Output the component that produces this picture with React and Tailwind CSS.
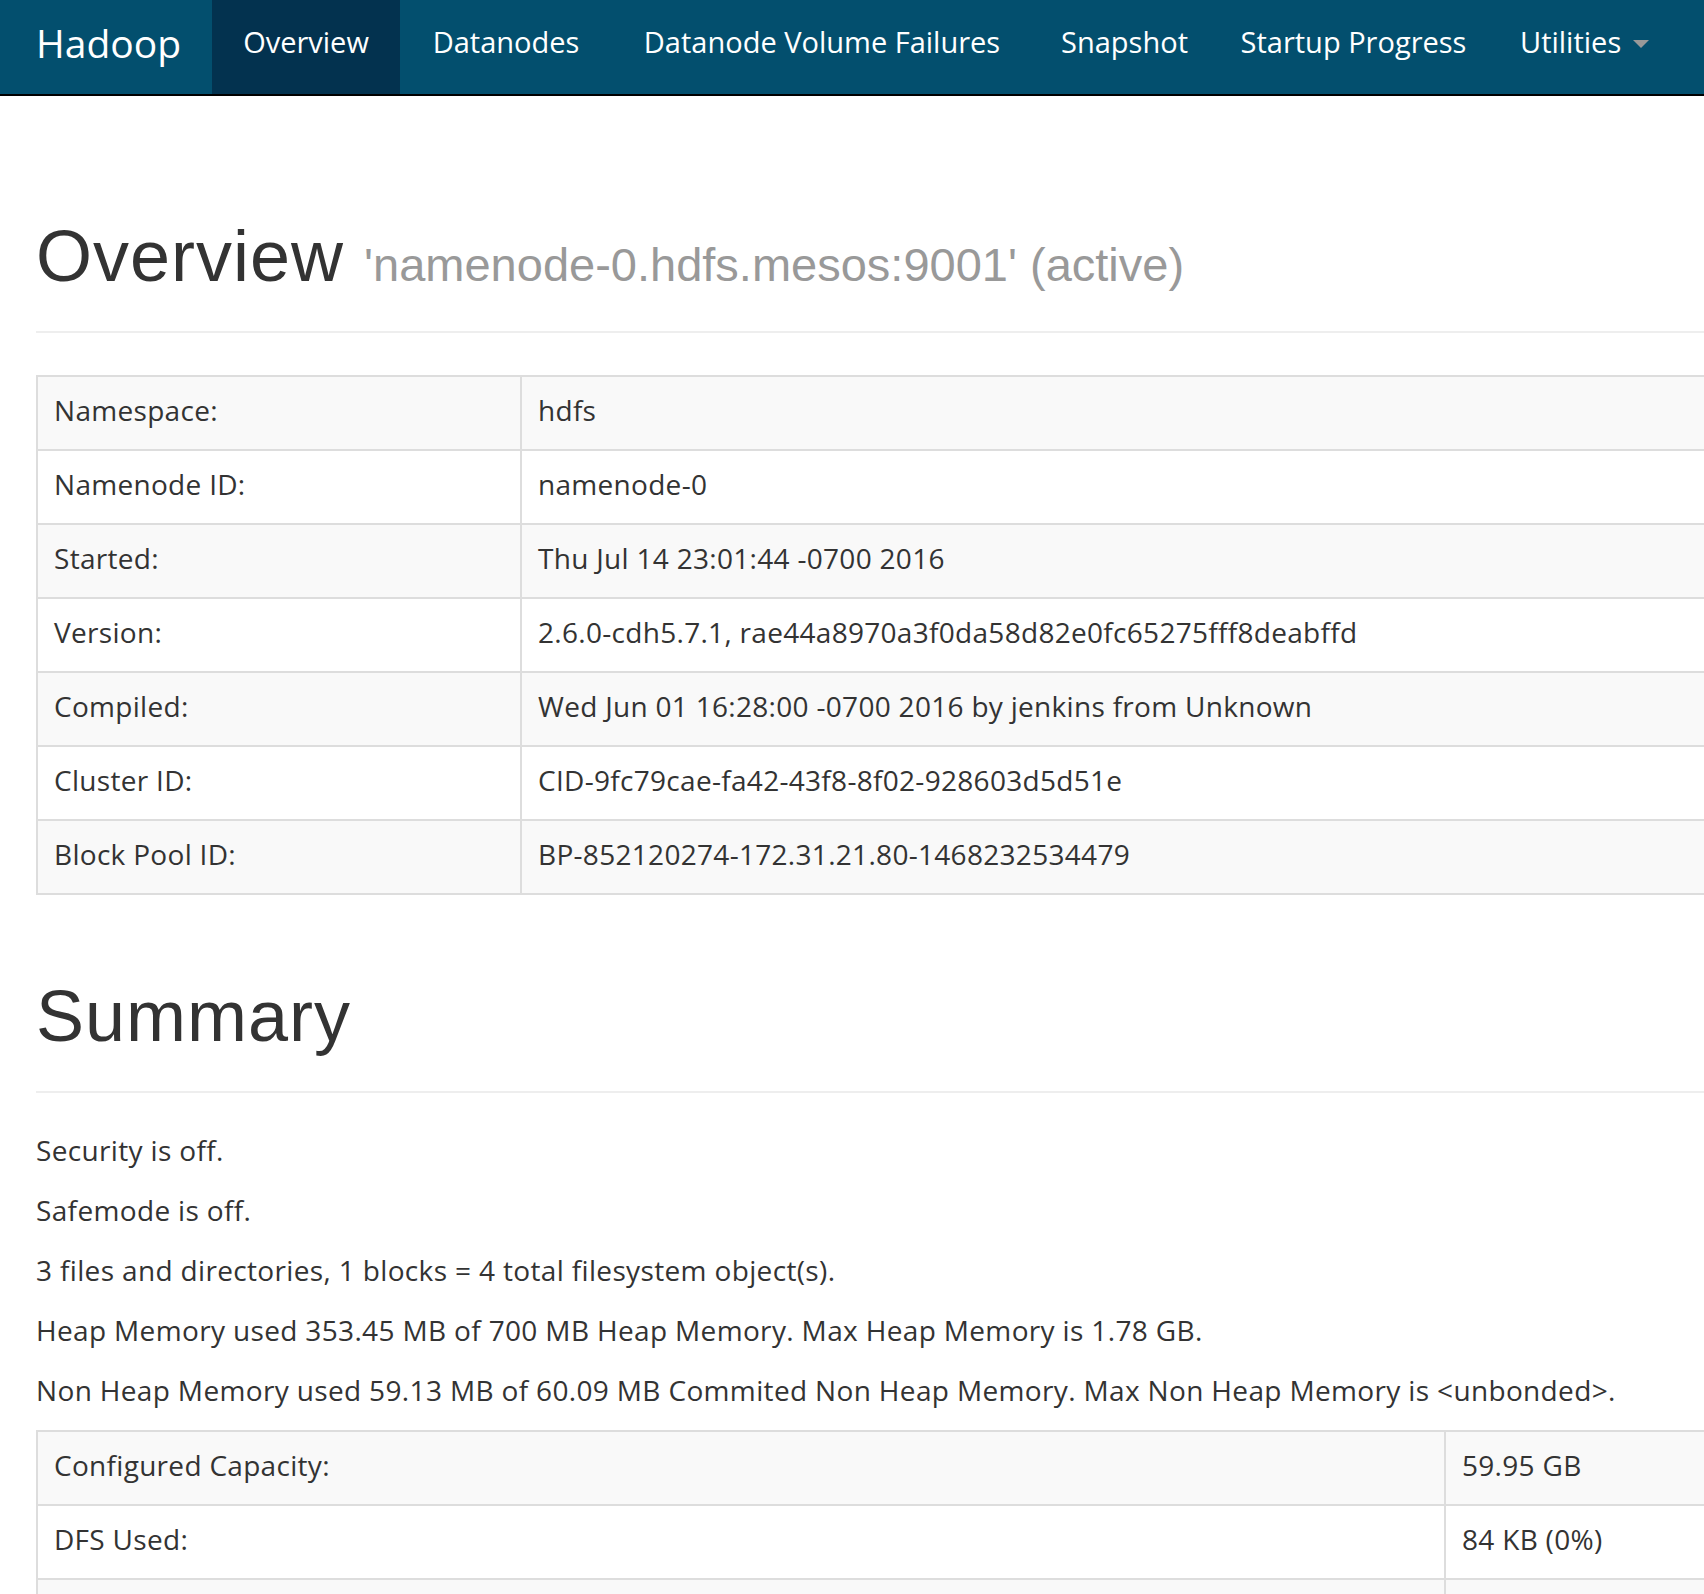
import React from 'react';

// nav boxes are sized to match the original page's spacing
const navLinks = [
  ['Datanodes', 'w-[212px]'],
  ['Datanode Volume Failures', 'w-[420px]'],
  ['Snapshot', 'w-[185px]'],
  ['Startup Progress', 'w-[273px]'],
];

const overviewRows = [
  ['Namespace:', 'hdfs'],
  ['Namenode ID:', 'namenode-0'],
  ['Started:', 'Thu Jul 14 23:01:44 -0700 2016'],
  ['Version:', '2.6.0-cdh5.7.1, rae44a8970a3f0da58d82e0fc65275fff8deabffd'],
  ['Compiled:', 'Wed Jun 01 16:28:00 -0700 2016 by jenkins from Unknown'],
  ['Cluster ID:', 'CID-9fc79cae-fa42-43f8-8f02-928603d5d51e'],
  ['Block Pool ID:', 'BP-852120274-172.31.21.80-1468232534479'],
];

const summaryLines = [
  'Security is off.',
  'Safemode is off.',
  '3 files and directories, 1 blocks = 4 total filesystem object(s).',
  'Heap Memory used 353.45 MB of 700 MB Heap Memory. Max Heap Memory is 1.78 GB.',
  'Non Heap Memory used 59.13 MB of 60.09 MB Commited Non Heap Memory. Max Non Heap Memory is <unbonded>.',
];

const capacityRows = [
  ['Configured Capacity:', '59.95 GB'],
  ['DFS Used:', '84 KB (0%)'],
  ['Non DFS Used:', '4.21 GB'],
];

function Navbar() {
  return (
    <div className="h-[96px] bg-[#034f6e] border-b-2 border-black flex items-stretch pl-[6px] text-white">
      <a className="w-[206px] pl-[30px] pb-[10px] flex items-center text-[39px] leading-none">Hadoop</a>
      <a className="w-[188px] pb-[10px] flex items-center justify-center bg-[#03324f] text-[29px]">Overview</a>
      {navLinks.map(([l, w]) => (
        <a key={l} className={`${w} pb-[10px] flex items-center justify-center text-[29px]`}>{l}</a>
      ))}
      <a className="pl-[30px] pb-[10px] flex items-center text-[29px]">
        Utilities
        <span className="ml-[12px] mt-[4px] w-0 h-0 border-l-[8px] border-r-[8px] border-t-[8px] border-l-transparent border-r-transparent border-t-[#999]" />
      </a>
    </div>
  );
}

function PageHeader({ title, small }) {
  return (
    <div className="pb-[35px] border-b-2 border-[#eee]">
      <h1 className="text-[72px] leading-[79px] text-[#333] font-['Liberation_Sans',Arial,sans-serif] tracking-[1px]">
        {title}
        {small && <small className="ml-[20px] text-[47px] leading-none text-[#999] tracking-normal">{small}</small>}
      </h1>
    </div>
  );
}

function InfoTable({ rows, firstCol }) {
  return (
    <table className="w-[1720px] border-collapse border-2 border-[#ddd] text-[28px] leading-[40px] text-[#333] tracking-[0.3px]">
      <tbody>
        {rows.map(([k, v], i) => (
          <tr key={k} className={i % 2 === 0 ? 'bg-[#f9f9f9]' : 'bg-white'}>
            <td className={`${firstCol} border-2 border-[#ddd] px-[16px] pt-[13px] pb-[19px] align-top`}>{k}</td>
            <td className="border-2 border-[#ddd] px-[16px] pt-[13px] pb-[19px] align-top">{v}</td>
          </tr>
        ))}
      </tbody>
    </table>
  );
}

export default function App() {
  return (
    <div className="w-[1704px] h-[1594px] overflow-hidden bg-white font-['Open_Sans',sans-serif]">
      <Navbar />
      <div className="pl-[36px]">
        <div className="pt-[121px]">
          <PageHeader title="Overview" small="'namenode-0.hdfs.mesos:9001' (active)" />
        </div>
        <div className="mt-[42px]">
          <InfoTable rows={overviewRows} firstCol="w-[484px]" />
        </div>
        <div className="pt-[82px]">
          <PageHeader title="Summary" />
        </div>
        <div className="mt-[37px] text-[28px] leading-[40px] text-[#333] tracking-[0.35px]">
          {summaryLines.map((s) => (
            <p key={s} className="mb-[20px]">{s}</p>
          ))}
        </div>
        <InfoTable rows={capacityRows} firstCol="w-[1408px]" />
      </div>
    </div>
  );
}
